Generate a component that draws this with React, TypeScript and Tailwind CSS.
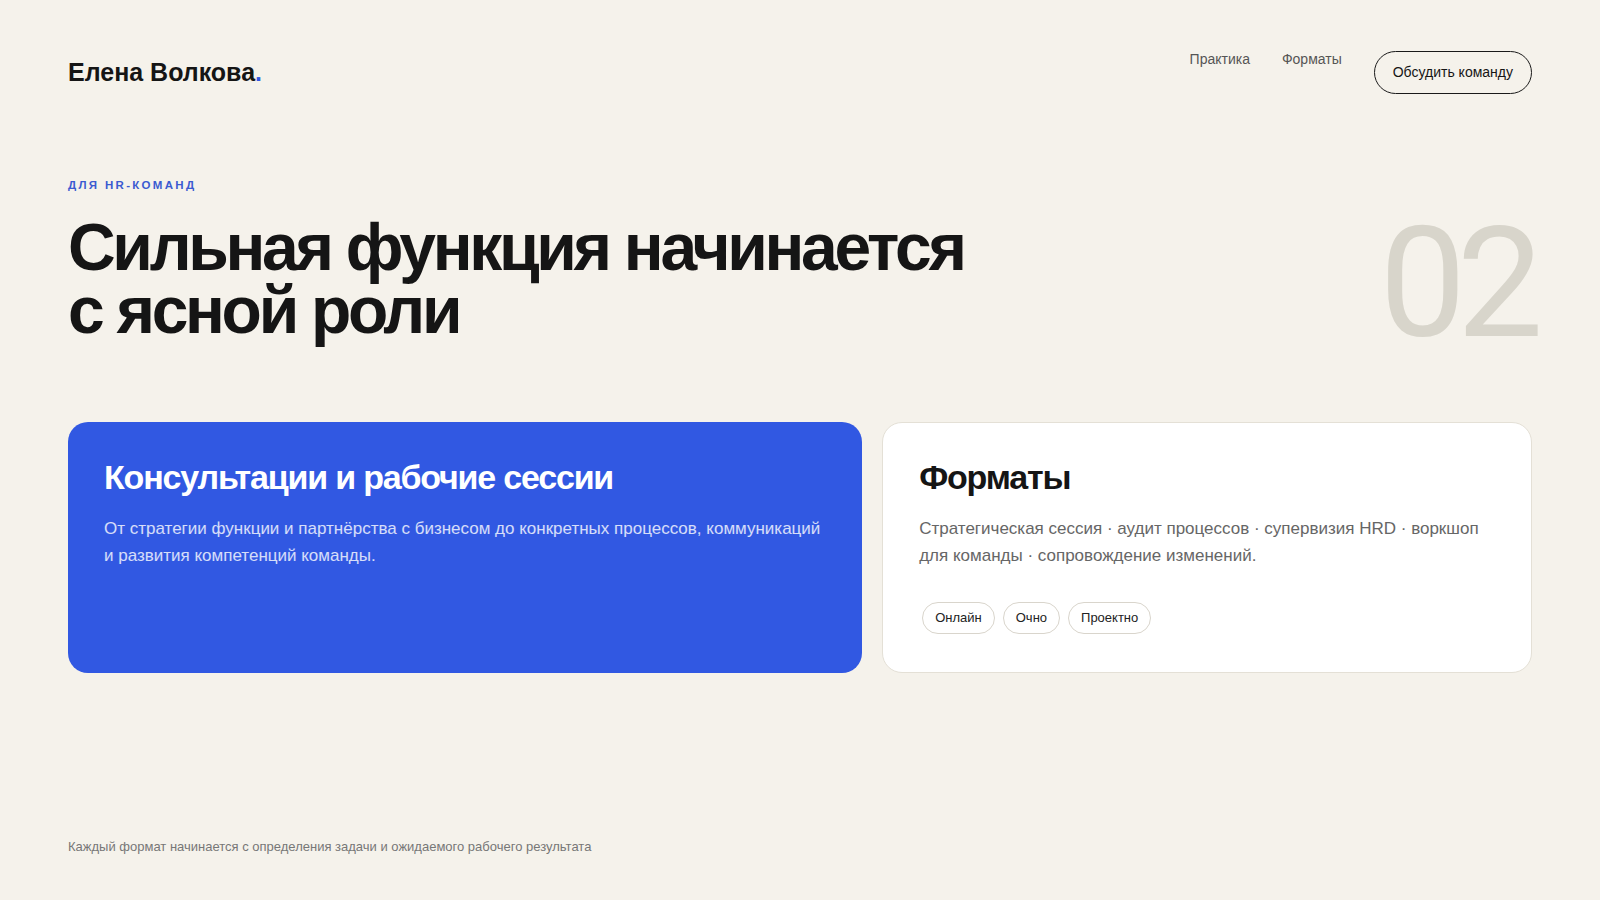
import React from "react";

export default function App() {
  return (
    <div
      className="min-h-screen flex flex-col bg-[#f5f2eb] text-[#151515] px-[68px]"
      style={{ fontFamily: '"Liberation Sans", Arial, sans-serif' }}
    >
      <header className="flex items-center justify-between pt-[51px]">
        <div className="text-[25px] font-bold tracking-[0em] leading-none">
          Елена Волкова<span className="text-[#3158e2]">.</span>
        </div>
        <nav className="flex items-start gap-8">
          <a className="text-[14px] leading-[16px] text-[#555]">Практика</a>
          <a className="text-[14px] leading-[16px] text-[#555]">Форматы</a>
          <button className="h-[43px] px-[18px] rounded-full border border-[#1a1a1a] text-[14px] text-[#151515]">
            Обсудить команду
          </button>
        </nav>
      </header>

      <section className="mt-[86px] flex items-end justify-between">
        <div>
          <div className="text-[11.5px] font-bold tracking-[0.2em] text-[#3b5bd1] leading-none">
            ДЛЯ HR-КОМАНД
          </div>
          <h1 className="mt-[24px] text-[66px] font-bold leading-[63px] tracking-[-0.05em]">
            Сильная функция начинается
            <br />с ясной роли
          </h1>
        </div>
        <div
          className="text-[154px] leading-none font-normal text-[#d8d5cb] tracking-[-0.06em] mr-[-2px] mb-[-19px]"
          style={{ fontFamily: 'Roboto, "Liberation Sans", sans-serif' }}
        >
          02
        </div>
      </section>

      <section className="mt-[80px] grid grid-cols-[11fr_9fr] gap-5">
        <div className="rounded-[20px] bg-[#3158e2] px-9 pt-[34px] pb-[34px] min-h-[251px]">
          <h2 className="text-[34px] font-bold leading-tight tracking-[-0.035em] text-white">
            Консультации и рабочие сессии
          </h2>
          <p className="mt-[18px] text-[17px] leading-[26.5px] text-white/80">
            От стратегии функции и партнёрства с бизнесом до конкретных процессов, коммуникаций и развития компетенций команды.
          </p>
        </div>
        <div className="rounded-[20px] bg-white border border-[#e4e0d6] px-9 pt-[33px] pb-[34px]">
          <h2 className="text-[34px] font-bold leading-tight tracking-[-0.035em] text-[#151515]">
            Форматы
          </h2>
          <p className="mt-[18px] text-[17px] leading-[26.5px] text-[#666]">
            Стратегическая сессия · аудит процессов · супервизия HRD · воркшоп для команды · сопровождение изменений.
          </p>
          <div className="mt-[33px] flex gap-2 pl-[3px]">
            {["Онлайн", "Очно", "Проектно"].map((t) => (
              <span
                key={t}
                className="h-[32px] px-3 flex items-center rounded-full border border-[#d9d5cc] text-[13px] text-[#222]"
              >
                {t}
              </span>
            ))}
          </div>
        </div>
      </section>

      <footer className="mt-auto pb-[44px] text-[13px] text-[#777]">
        Каждый формат начинается с определения задачи и ожидаемого рабочего результата
      </footer>
    </div>
  );
}
